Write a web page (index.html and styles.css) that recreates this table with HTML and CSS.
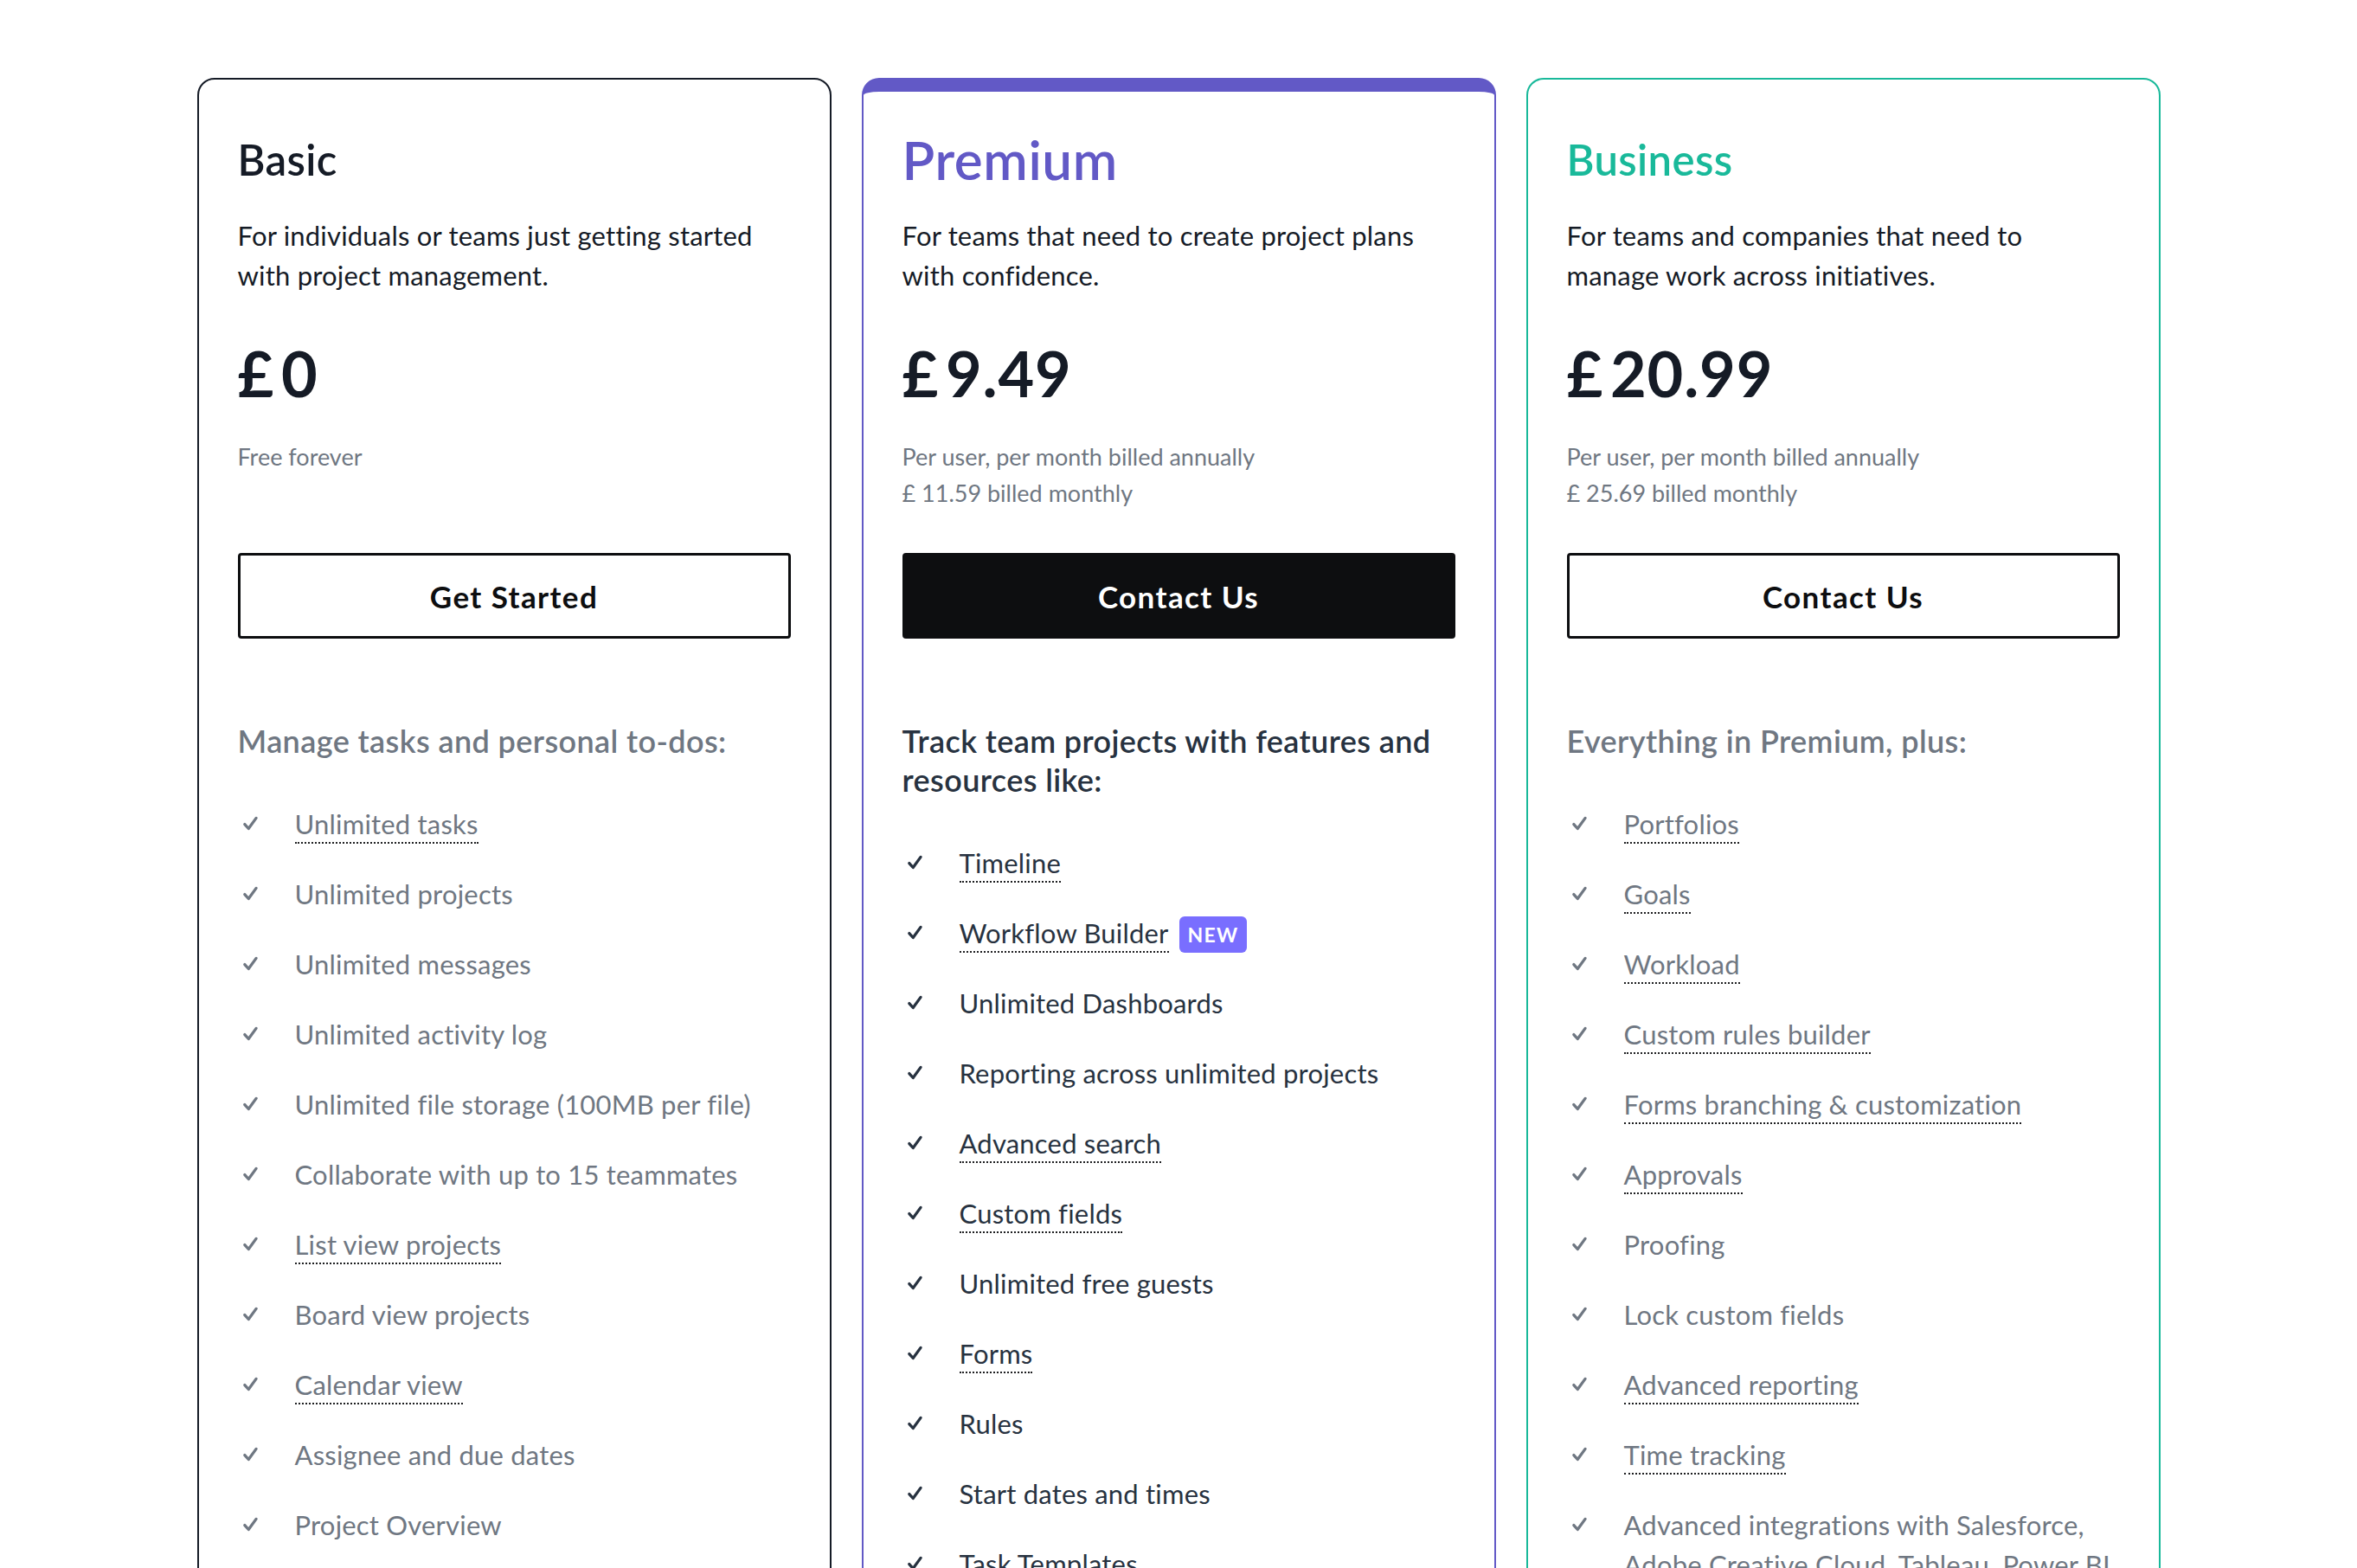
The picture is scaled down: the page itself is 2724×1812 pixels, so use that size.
FILE: index.html
```html
<!DOCTYPE html>
<html lang="en">
<head>
<meta charset="utf-8">
<title>Pricing</title>
<link rel="stylesheet" href="styles.css">
</head>
<body>
<main class="pricing">
  <section class="card card-basic">
    <h2 class="plan-title">Basic</h2>
    <p class="plan-desc">For individuals or teams just getting started<br>with project management.</p>
    <div class="price"><span class="cur">£</span>0</div>
    <div class="price-note"><div>Free forever</div></div>
    <a class="btn" href="#">Get Started</a>
    <h3 class="features-title">Manage tasks and personal to-dos:</h3>
    <ul class="features">
      <li><span class="chk"><svg viewBox="0 0 20 20"><path d="M3.5 10.5 L7.5 15 L15.5 4"/></svg></span><span><span class="u">Unlimited tasks</span></span></li>
      <li><span class="chk"><svg viewBox="0 0 20 20"><path d="M3.5 10.5 L7.5 15 L15.5 4"/></svg></span><span>Unlimited projects</span></li>
      <li><span class="chk"><svg viewBox="0 0 20 20"><path d="M3.5 10.5 L7.5 15 L15.5 4"/></svg></span><span>Unlimited messages</span></li>
      <li><span class="chk"><svg viewBox="0 0 20 20"><path d="M3.5 10.5 L7.5 15 L15.5 4"/></svg></span><span>Unlimited activity log</span></li>
      <li><span class="chk"><svg viewBox="0 0 20 20"><path d="M3.5 10.5 L7.5 15 L15.5 4"/></svg></span><span>Unlimited file storage (100MB per file)</span></li>
      <li><span class="chk"><svg viewBox="0 0 20 20"><path d="M3.5 10.5 L7.5 15 L15.5 4"/></svg></span><span>Collaborate with up to 15 teammates</span></li>
      <li><span class="chk"><svg viewBox="0 0 20 20"><path d="M3.5 10.5 L7.5 15 L15.5 4"/></svg></span><span><span class="u">List view projects</span></span></li>
      <li><span class="chk"><svg viewBox="0 0 20 20"><path d="M3.5 10.5 L7.5 15 L15.5 4"/></svg></span><span>Board view projects</span></li>
      <li><span class="chk"><svg viewBox="0 0 20 20"><path d="M3.5 10.5 L7.5 15 L15.5 4"/></svg></span><span><span class="u">Calendar view</span></span></li>
      <li><span class="chk"><svg viewBox="0 0 20 20"><path d="M3.5 10.5 L7.5 15 L15.5 4"/></svg></span><span>Assignee and due dates</span></li>
      <li><span class="chk"><svg viewBox="0 0 20 20"><path d="M3.5 10.5 L7.5 15 L15.5 4"/></svg></span><span>Project Overview</span></li>
      <li><span class="chk"><svg viewBox="0 0 20 20"><path d="M3.5 10.5 L7.5 15 L15.5 4"/></svg></span><span>iOS and Android mobile apps</span></li>
    </ul>
  </section>

  <section class="card card-premium">
    <h2 class="plan-title">Premium</h2>
    <p class="plan-desc">For teams that need to create project plans<br>with confidence.</p>
    <div class="price"><span class="cur">£</span>9.49</div>
    <div class="price-note"><div>Per user, per month billed annually</div><div>£ 11.59 billed monthly</div></div>
    <a class="btn btn-dark" href="#">Contact Us</a>
    <h3 class="features-title">Track team projects with features and<br>resources like:</h3>
    <ul class="features">
      <li><span class="chk"><svg viewBox="0 0 20 20"><path d="M3.5 10.5 L7.5 15 L15.5 4"/></svg></span><span><span class="u">Timeline</span></span></li>
      <li><span class="chk"><svg viewBox="0 0 20 20"><path d="M3.5 10.5 L7.5 15 L15.5 4"/></svg></span><span><span class="u">Workflow Builder</span><span class="badge">NEW</span></span></li>
      <li><span class="chk"><svg viewBox="0 0 20 20"><path d="M3.5 10.5 L7.5 15 L15.5 4"/></svg></span><span>Unlimited Dashboards</span></li>
      <li><span class="chk"><svg viewBox="0 0 20 20"><path d="M3.5 10.5 L7.5 15 L15.5 4"/></svg></span><span>Reporting across unlimited projects</span></li>
      <li><span class="chk"><svg viewBox="0 0 20 20"><path d="M3.5 10.5 L7.5 15 L15.5 4"/></svg></span><span><span class="u">Advanced search</span></span></li>
      <li><span class="chk"><svg viewBox="0 0 20 20"><path d="M3.5 10.5 L7.5 15 L15.5 4"/></svg></span><span><span class="u">Custom fields</span></span></li>
      <li><span class="chk"><svg viewBox="0 0 20 20"><path d="M3.5 10.5 L7.5 15 L15.5 4"/></svg></span><span>Unlimited free guests</span></li>
      <li><span class="chk"><svg viewBox="0 0 20 20"><path d="M3.5 10.5 L7.5 15 L15.5 4"/></svg></span><span><span class="u">Forms</span></span></li>
      <li><span class="chk"><svg viewBox="0 0 20 20"><path d="M3.5 10.5 L7.5 15 L15.5 4"/></svg></span><span>Rules</span></li>
      <li><span class="chk"><svg viewBox="0 0 20 20"><path d="M3.5 10.5 L7.5 15 L15.5 4"/></svg></span><span>Start dates and times</span></li>
      <li><span class="chk"><svg viewBox="0 0 20 20"><path d="M3.5 10.5 L7.5 15 L15.5 4"/></svg></span><span>Task Templates</span></li>
      <li><span class="chk"><svg viewBox="0 0 20 20"><path d="M3.5 10.5 L7.5 15 L15.5 4"/></svg></span><span>Milestones</span></li>
    </ul>
  </section>

  <section class="card card-business">
    <h2 class="plan-title">Business</h2>
    <p class="plan-desc">For teams and companies that need to<br>manage work across initiatives.</p>
    <div class="price"><span class="cur">£</span>20.99</div>
    <div class="price-note"><div>Per user, per month billed annually</div><div>£ 25.69 billed monthly</div></div>
    <a class="btn" href="#">Contact Us</a>
    <h3 class="features-title">Everything in Premium, plus:</h3>
    <ul class="features">
      <li><span class="chk"><svg viewBox="0 0 20 20"><path d="M3.5 10.5 L7.5 15 L15.5 4"/></svg></span><span><span class="u">Portfolios</span></span></li>
      <li><span class="chk"><svg viewBox="0 0 20 20"><path d="M3.5 10.5 L7.5 15 L15.5 4"/></svg></span><span><span class="u">Goals</span></span></li>
      <li><span class="chk"><svg viewBox="0 0 20 20"><path d="M3.5 10.5 L7.5 15 L15.5 4"/></svg></span><span><span class="u">Workload</span></span></li>
      <li><span class="chk"><svg viewBox="0 0 20 20"><path d="M3.5 10.5 L7.5 15 L15.5 4"/></svg></span><span><span class="u">Custom rules builder</span></span></li>
      <li><span class="chk"><svg viewBox="0 0 20 20"><path d="M3.5 10.5 L7.5 15 L15.5 4"/></svg></span><span><span class="u">Forms branching &amp; customization</span></span></li>
      <li><span class="chk"><svg viewBox="0 0 20 20"><path d="M3.5 10.5 L7.5 15 L15.5 4"/></svg></span><span><span class="u">Approvals</span></span></li>
      <li><span class="chk"><svg viewBox="0 0 20 20"><path d="M3.5 10.5 L7.5 15 L15.5 4"/></svg></span><span>Proofing</span></li>
      <li><span class="chk"><svg viewBox="0 0 20 20"><path d="M3.5 10.5 L7.5 15 L15.5 4"/></svg></span><span>Lock custom fields</span></li>
      <li><span class="chk"><svg viewBox="0 0 20 20"><path d="M3.5 10.5 L7.5 15 L15.5 4"/></svg></span><span><span class="u">Advanced reporting</span></span></li>
      <li><span class="chk"><svg viewBox="0 0 20 20"><path d="M3.5 10.5 L7.5 15 L15.5 4"/></svg></span><span><span class="u">Time tracking</span></span></li>
      <li><span class="chk"><svg viewBox="0 0 20 20"><path d="M3.5 10.5 L7.5 15 L15.5 4"/></svg></span><span>Advanced integrations with Salesforce, Adobe Creative Cloud, Tableau, Power BI, and more</span></li>
    </ul>
  </section>
</main>
</body>
</html>
```
FILE: styles.css
```css
html, body {
  margin: 0;
  padding: 0;
  background: #ffffff;
  height: 100%;
  overflow: hidden;
}

body {
  font-family: "Lato", "Noto Sans", sans-serif;
  color: #151b26;
}

.pricing {
  width: 2269px;
  margin: 90px auto 0;
  display: grid;
  grid-template-columns: repeat(3, 1fr);
  column-gap: 35px;
  align-items: start;
}

.card {
  box-sizing: border-box;
  border: 2px solid #151b26;
  border-radius: 20px;
  padding: 60px 45px 80px;
  min-height: 2200px;
  background: #fff;
}

.card-premium {
  border-color: #6259c6;
  border-top-width: 16px;
  padding-top: 46px;
}

.card-business {
  border-color: #19b99a;
}

.plan-title {
  margin: 0;
  font-size: 49px;
  line-height: 64px;
  font-weight: 600;
  letter-spacing: 0.4px;
  color: #151b26;
}

.card-premium .plan-title {
  font-size: 62px;
  letter-spacing: 0.6px;
  color: #6259c6;
}

.card-business .plan-title {
  color: #19b99a;
}

.plan-desc {
  margin: 33px 0 0;
  font-size: 31px;
  line-height: 46px;
  letter-spacing: 0.2px;
  color: #151b26;
}

.price {
  margin-top: 50px;
  font-size: 72px;
  line-height: 80px;
  font-weight: 700;
  letter-spacing: 0.8px;
  color: #151b26;
}

.price .cur {
  margin-right: 8px;
}

.price-note {
  margin-top: 36px;
  min-height: 84px;
  font-size: 27px;
  line-height: 42px;
  color: #6f7782;
}

.btn {
  margin-top: 48px;
  box-sizing: border-box;
  height: 99px;
  display: flex;
  align-items: center;
  justify-content: center;
  border: 3px solid #0d0e10;
  border-radius: 4px;
  font-size: 35px;
  font-weight: 700;
  letter-spacing: 1.4px;
  color: #0d0e10;
  text-decoration: none;
}

.btn-dark {
  background: #0d0e10;
  color: #ffffff;
}

.features-title {
  margin: 96px 0 0;
  font-size: 36px;
  line-height: 45px;
  font-weight: 600;
  letter-spacing: 0.4px;
  color: #6f7782;
}

.card-premium .features-title {
  color: #273240;
}

.features {
  list-style: none;
  margin: 50px 0 0;
  padding: 0;
}

.features li {
  display: grid;
  grid-template-columns: 66px 1fr;
  font-size: 31px;
  line-height: 46px;
  letter-spacing: 0.2px;
  color: #6f7782;
  margin-bottom: 35px;
}

.card-premium .features li {
  color: #273240;
}

.chk {
  height: 46px;
  display: flex;
  align-items: center;
  padding-left: 4px;
}

.chk svg {
  width: 22px;
  height: 22px;
  fill: none;
  stroke: currentColor;
  stroke-width: 3;
  stroke-linecap: round;
  stroke-linejoin: round;
}

.u {
  border-bottom: 2px dotted #1e1f21;
  padding-bottom: 2px;
}

.badge {
  display: inline-block;
  margin-left: 12px;
  padding: 0 10px;
  height: 42px;
  line-height: 42px;
  border-radius: 6px;
  background: #796eff;
  color: #ffffff;
  font-size: 23px;
  font-weight: 700;
  letter-spacing: 1.2px;
  vertical-align: 1px;
}
```
